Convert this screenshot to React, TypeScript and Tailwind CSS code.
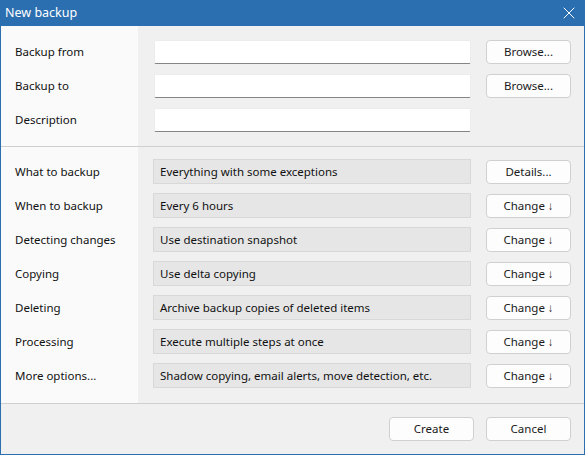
import { X } from 'lucide-react'

const FIELDS = [
  { label: 'Backup from', browse: true },
  { label: 'Backup to', browse: true },
  { label: 'Description', browse: false },
]

const OPTIONS = [
  { label: 'What to backup', value: 'Everything with some exceptions', button: 'Details...' },
  { label: 'When to backup', value: 'Every 6 hours', button: 'Change' },
  { label: 'Detecting changes', value: 'Use destination snapshot', button: 'Change' },
  { label: 'Copying', value: 'Use delta copying', button: 'Change' },
  { label: 'Deleting', value: 'Archive backup copies of deleted items', button: 'Change' },
  { label: 'Processing', value: 'Execute multiple steps at once', button: 'Change' },
  { label: 'More options...', value: 'Shadow copying, email alerts, move detection, etc.', button: 'Change' },
]

function Button({ children, className = '' }: { children: React.ReactNode; className?: string }) {
  return (
    <button
      className={`h-[24px] rounded-[4px] border border-[#d0d0d0] bg-[#fdfdfd] text-[11.5px] text-[#1a1a1a] flex items-center justify-center ${className}`}
    >
      {children}
    </button>
  )
}

export default function App() {
  return (
    <div
      className="w-[585px] h-[455px] flex flex-col border border-[#2b6fb1] bg-[#f0f0f0] text-[11.5px] text-[#111]"
      style={{ fontFamily: '"Noto Sans", "Open Sans", sans-serif' }}
    >
      {/* Title bar */}
      <div className="h-[26px] shrink-0 -mx-px -mt-px pl-[5px] pr-[6px] bg-[#2b6fb1] text-white flex items-center justify-between">
        <span className="text-[12.5px] pt-[1px]">New backup</span>
        <X size={20} strokeWidth={1.2} />
      </div>

      {/* Paths */}
      <div className="flex border-b border-[#cfcfcf]">
        <div className="w-[137px] bg-[#fafafa] pl-[14px] pt-[14px] pb-[14px] flex flex-col gap-[10px]">
          {FIELDS.map(f => (
            <div key={f.label} className="h-[24px] flex items-center">{f.label}</div>
          ))}
        </div>
        <div className="flex-1 pl-[16px] pr-[13px] pt-[14px] pb-[14px] flex flex-col gap-[10px]">
          {FIELDS.map(f => (
            <div key={f.label} className="h-[24px] flex items-center gap-[15px]">
              <div className="w-[317px] h-[24px] bg-white border border-[#ececec] border-b-[#858585] rounded-[2px]" />
              {f.browse && <Button className="w-[85px] h-[23px]">Browse...</Button>}
            </div>
          ))}
        </div>
      </div>

      {/* Options */}
      <div className="flex border-b border-[#cfcfcf]">
        <div className="w-[137px] bg-[#fafafa] pl-[14px] pt-[12px] pb-[15px] flex flex-col gap-[9px]">
          {OPTIONS.map(o => (
            <div key={o.label} className="h-[25px] flex items-center">{o.label}</div>
          ))}
        </div>
        <div className="flex-1 pl-[15px] pr-[13px] pt-[12px] pb-[15px] flex flex-col gap-[9px]">
          {OPTIONS.map(o => (
            <div key={o.label} className="h-[25px] flex items-center gap-[15px]">
              <div className="w-[318px] h-[25px] bg-[#e6e6e6] border border-[#d8d8d8] pl-[6px] flex items-center">
                {o.value}
              </div>
              <Button className="w-[85px]">
                {o.button === 'Change' ? (
                  <span>
                    Change <span className="text-[#222] font-semibold">↓</span>
                  </span>
                ) : (
                  o.button
                )}
              </Button>
            </div>
          ))}
        </div>
      </div>

      {/* Footer */}
      <div className="flex-1 flex items-start justify-end gap-[12px] pt-[13px] pr-[13px]">
        <Button className="w-[85px]">Create</Button>
        <Button className="w-[85px]">Cancel</Button>
      </div>
    </div>
  )
}
